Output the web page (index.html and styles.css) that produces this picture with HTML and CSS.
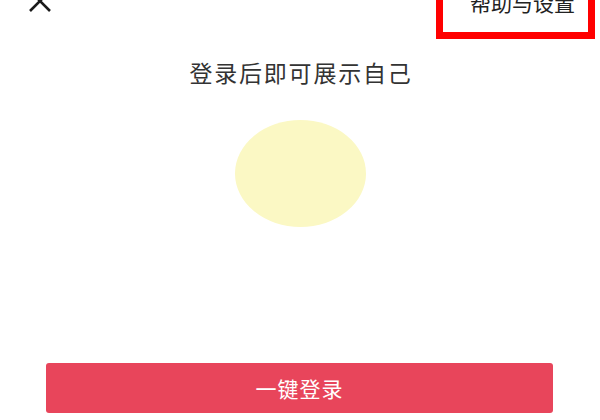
FILE: index.html
```html
<!DOCTYPE html>
<html lang="zh-CN">
<head>
    <meta charset="UTF-8">
    <meta name="viewport" content="width=device-width, initial-scale=1.0">
    <title>登录</title>
    <link rel="stylesheet" href="styles.css">
</head>
<body>
    <header class="topbar">
        <span class="close">
            <svg width="24" height="22" viewBox="0 0 24 22">
                <path d="M2 1 L22 21 M22 1 L2 21" stroke="#1a1a1a" stroke-width="2.6" fill="none"/>
            </svg>
        </span>
        <span class="settings">帮助与设置</span>
    </header>
    <div class="main">
        <h2 class="title">登录后即可展示自己</h2>
        <div class="avatar"></div>
    </div>
    <button class="btn">一键登录</button>
</body>
</html>
```

FILE: styles.css
```css
body {
    margin: 0;
    background: #fff;
    font-family: "Noto Sans CJK SC", "Noto Sans", sans-serif;
    color: #333;
    overflow: hidden;
}
.topbar {
    display: flex;
    align-items: center;
    justify-content: space-between;
    margin-top: -37px;
    padding: 0 5px 0 28px;
}
.close {
    display: flex;
}
.settings {
    border: 7px solid #f00;
    padding: 20px 13px 18px 27px;
    font-size: 21px;
    line-height: 24px;
    color: #222;
}
.main {
    display: flex;
    flex-direction: column;
    align-items: center;
}
.title {
    margin: 18px 0 0;
    font-size: 23px;
    font-weight: normal;
    line-height: 30px;
    letter-spacing: 1.8px;
    padding-left: 2px;
}
.avatar {
    margin-top: 33px;
    width: 131px;
    height: 107px;
    border-radius: 50%;
    background: #fbf8c4;
}
.btn {
    display: block;
    margin: 136px 0 0 46px;
    width: 507px;
    height: 50px;
    border: none;
    border-radius: 3px;
    background: #e8455b;
    color: #fff;
    font-family: inherit;
    font-size: 21px;
    letter-spacing: 1px;
}
```
